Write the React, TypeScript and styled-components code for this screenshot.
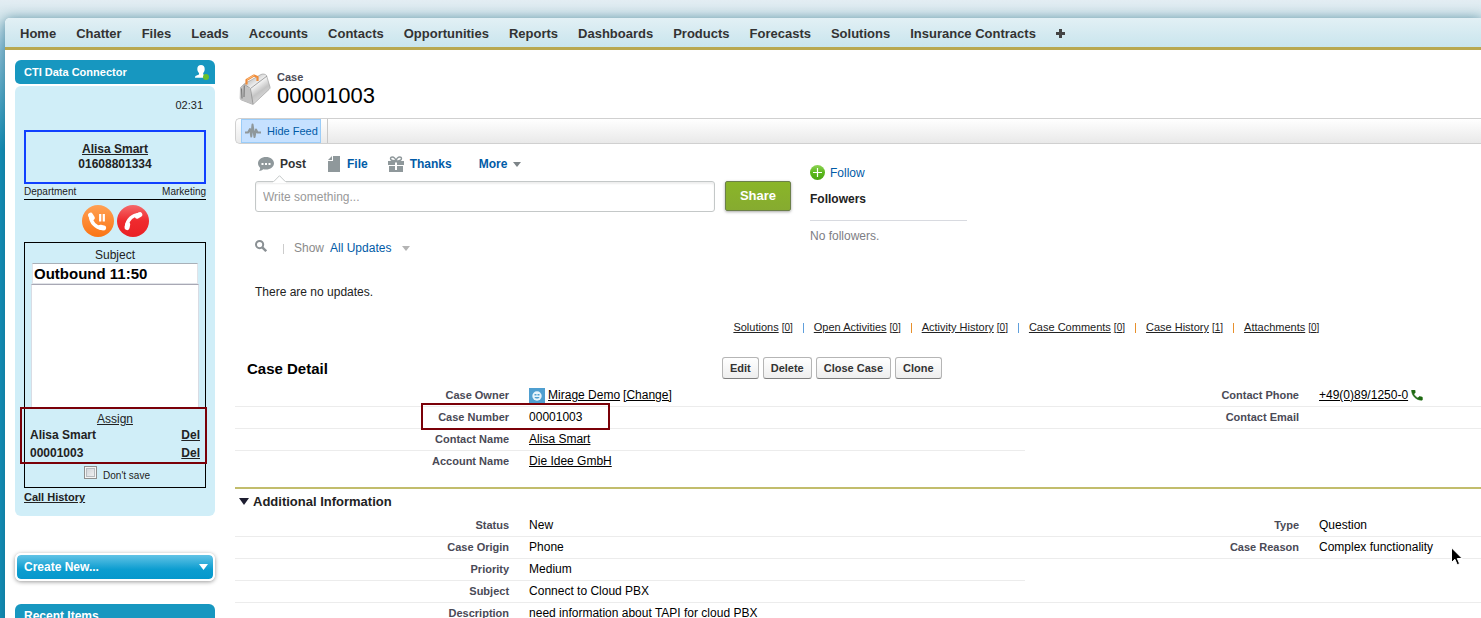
import React from 'react';
import styled, { createGlobalStyle, css } from 'styled-components';

const GlobalStyle = createGlobalStyle`
  *, *::before, *::after { box-sizing: border-box; }
  html, body { margin: 0; padding: 0; }
  body {
    height: 100vh;
    overflow: hidden;
    font-family: 'Liberation Sans', Arial, sans-serif;
    font-size: 12px;
    line-height: 15px;
    color: #222;
    background: #1590b8 linear-gradient(#e3edf3 0, #d3e6ec 18px, #8cc0d6 50px, #1590b8 150px) no-repeat;
  }
  button, input, textarea { font-family: inherit; }
  a { color: inherit; }
  svg { display: block; flex: none; }
`;

const Shell = styled.div`
  padding: 18px 0 0 5px;
`;

const Frame = styled.div`
  min-height: 100vh;
  background: #fff;
  border-top-left-radius: 5px;
  box-shadow: 0 0 12px rgba(0, 80, 110, 0.5);
`;

const TabBar = styled.nav`
  display: flex;
  align-items: center;
  height: 32px;
  padding: 2px 5px 0;
  border-bottom: 3px solid #b8a850;
  border-top-left-radius: 5px;
  background: linear-gradient(#e2f0f5, #c9e5ed);
`;

const Tab = styled.a`
  padding: 0 10px;
  font-size: 13px;
  font-weight: bold;
  color: #333;
  text-decoration: none;
  white-space: nowrap;
`;

const Columns = styled.div`
  display: grid;
  grid-template-columns: 200px minmax(0, 1fr);
  column-gap: 20px;
  padding: 10px 0 0 10px;
`;

/* ---------- sidebar ---------- */

const Sidebar = styled.aside`
  display: flex;
  flex-direction: column;
`;

const PanelTitle = styled.h2<{ $size?: number }>`
  display: flex;
  align-items: center;
  justify-content: space-between;
  height: 24px;
  margin: 0;
  padding: 0 5px 0 9px;
  border-radius: 6px 6px 0 5px;
  background: #1797c0;
  color: #fff;
  font-size: ${(p) => p.$size ?? 11}px;
`;

const CallPanel = styled.section`
  margin: 2px 0 37px;
  padding: 12px 9px 11px;
  border-radius: 6px;
  background: #d0eef8;
`;

const Timer = styled.div`
  padding-right: 3px;
  text-align: right;
  font-size: 11px;
`;

const Caller = styled.div`
  display: flex;
  flex-direction: column;
  align-items: center;
  justify-content: center;
  height: 54px;
  margin-top: 17px;
  border: 2px solid #1040ff;
  font-weight: bold;
`;

const Department = styled.div`
  display: flex;
  justify-content: space-between;
  border-bottom: 1px solid #000;
  font-size: 10px;
`;

const CallActions = styled.div`
  display: flex;
  justify-content: center;
  gap: 3px;
  padding: 5px 0;
`;

const RoundButton = styled.button`
  width: 32px;
  height: 32px;
  padding: 0;
  border: 0;
  border-radius: 50%;
  background: none;
`;

const CallForm = styled.form`
  display: flex;
  flex-direction: column;
  border: 1px solid #000;
  padding: 5px 6px 4px;
`;

const SubjectLabel = styled.label`
  text-align: center;
`;

const SubjectInput = styled.input`
  height: 21px;
  margin: 0 1px;
  padding: 0 1px;
  border: 1px solid #e0e3e8;
  border-top-color: #a8b0b8;
  background: #fff;
  color: #000;
  font-size: 15px;
  font-weight: bold;
`;

const Notes = styled.textarea`
  height: 124px;
  padding: 2px;
  border: 1px solid #d8dce4;
  border-top-color: #a8a8b4;
  border-bottom: 0;
  background: #fff;
  resize: none;
`;

const Assign = styled.div`
  position: relative;
  display: flex;
  flex-direction: column;
  align-items: center;
  padding: 4px 0 3px;

  &::after {
    content: '';
    position: absolute;
    inset: -1px -8px 0 -11px;
    border: 2px solid #7a0008;
    pointer-events: none;
  }
`;

const AssignRow = styled.div`
  display: flex;
  align-self: stretch;
  justify-content: space-between;
  margin: 0 -1px;
  line-height: 16px;
  font-weight: bold;

  & + & { margin-top: 2px; }
`;

const LinkButton = styled.button`
  padding: 0;
  border: 0;
  background: none;
  color: inherit;
  font-size: 12px;
  font-weight: inherit;
  line-height: inherit;
  text-decoration: underline;
`;

const DontSave = styled.label`
  display: flex;
  align-items: flex-end;
  justify-content: center;
  gap: 6px;
  padding: 2px 0 0 4px;
  font-size: 10px;
`;

const Checkbox = styled.input`
  appearance: none;
  width: 13px;
  height: 13px;
  margin: 0 0 4px;
  border: 1px solid #8e8f8f;
  background: linear-gradient(135deg, #cbcfd5, #f6f6f6);
  box-shadow: inset 0 0 0 1px #f4f4f4, inset 0 0 0 2px #b8bcc0;
`;

const HistoryLink = styled.a`
  display: block;
  margin-top: 2px;
  font-size: 11px;
  font-weight: bold;
`;

const CreateNew = styled.button`
  display: flex;
  align-items: center;
  justify-content: space-between;
  height: 28px;
  margin-bottom: 23px;
  padding: 0 5px 0 7px;
  border: 2px solid #fff;
  border-radius: 6px;
  background: linear-gradient(#62c3e6, #0c9dd0 60%, #0598cc) padding-box;
  box-shadow: 0 1px 4px rgba(0, 0, 0, 0.4);
  color: #fff;
  font-size: 12px;
  font-weight: bold;
`;

/* ---------- main column ---------- */

const Main = styled.main`
  min-width: 0;
`;

const PageHeader = styled.header`
  display: flex;
  align-items: center;
  gap: 6px;
  height: 58px;
  padding: 0 0 0 4px;
`;

const Kind = styled.div`
  line-height: 13px;
  font-size: 11px;
  font-weight: bold;
  color: #4a4a56;
`;

const Title = styled.h1`
  margin: 0;
  font-size: 22px;
  line-height: 24px;
  font-weight: normal;
  color: #000;
`;

const FeedBar = styled.div`
  display: flex;
  height: 26px;
  padding-left: 5px;
  border: 1px solid #d0d0d0;
  border-right: 0;
  border-radius: 5px 0 0 5px;
  background: linear-gradient(#fff, #e9e9e9);
`;

const HideFeed = styled.div`
  display: flex;
  padding-right: 6px;
  border-right: 1px solid #c8c8c8;
`;

const HideFeedButton = styled.button`
  display: flex;
  align-items: center;
  gap: 6px;
  padding: 0 2px 0 3px;
  border: 1px solid #9accf8;
  background: #c6e1ff;
  color: #015ba7;
  font-size: 11px;
`;

const Feed = styled.div`
  display: grid;
  grid-template-columns: 536px 157px;
  column-gap: 19px;
  padding: 12px 0 0 20px;
`;

const Publisher = styled.div`
  display: flex;
  align-items: center;
  height: 16px;
  padding-left: 3px;
`;

const PublisherTab = styled.button<{ $active?: boolean; $gap?: number; $after?: number }>`
  display: flex;
  align-items: center;
  gap: ${(p) => p.$gap ?? 6}px;
  margin-right: ${(p) => p.$after ?? 20}px;
  padding: 0;
  border: 0;
  background: none;
  font-size: 12px;
  font-weight: bold;
  color: ${(p) => (p.$active ? '#333' : '#015ba7')};
`;

const Composer = styled.div`
  position: relative;
  display: flex;
  gap: 10px;
  margin-top: 9px;
`;

const Notch = styled.svg`
  position: absolute;
  left: 18px;
  top: -6px;
`;

const PostInput = styled.input`
  flex: 1;
  min-width: 0;
  height: 31px;
  padding: 0 7px;
  border: 1px solid #c4c8c8;
  border-radius: 3px;
  box-shadow: inset 0 2px 2px #eee;
  background: #fff;
  font-size: 12px;
  &::placeholder { color: #999; }
`;

const ShareButton = styled.button`
  width: 66px;
  height: 30px;
  padding: 0 0 2px;
  border: 1px solid #6c8049;
  border-radius: 2px;
  background: linear-gradient(#8ab528, #86ab30);
  box-shadow: 0 1px 3px rgba(0, 0, 0, 0.35);
  color: #fff;
  font-size: 13px;
  font-weight: bold;
`;

const FilterRow = styled.div`
  display: flex;
  align-items: center;
  margin: 28px 0;
`;

const SearchButton = styled.button`
  margin-bottom: 5px;
  padding: 0;
  border: 0;
  background: none;
`;

const Show = styled.div`
  margin-left: 16px;
  padding-left: 11px;
  color: #8a8a8a;
  background: linear-gradient(#ccc, #ccc) 0 50% / 1px 10px no-repeat;
`;

const UpdatesMenu = styled.button`
  display: inline-flex;
  align-items: center;
  gap: 11px;
  margin-left: 6px;
  padding: 0;
  border: 0;
  background: none;
  color: #015ba7;
  font-size: 12px;
`;

const Empty = styled.p`
  margin: 0;
`;

const Followers = styled.div`
  padding-top: 9px;
`;

const FollowButton = styled.button`
  display: flex;
  align-items: center;
  gap: 5px;
  height: 15px;
  padding: 0;
  border: 0;
  background: none;
  color: #015ba7;
  font-size: 12px;
`;

const FollowersTitle = styled.h3`
  margin: 12px 0 8px;
  padding-bottom: 13px;
  border-bottom: 1px solid #d8dae0;
  font-size: 12px;
  color: #222;
`;

const Muted = styled.p`
  margin: 0;
  color: #7d7d84;
`;

const RelatedLinks = styled.ul`
  display: flex;
  margin: 20px 0 22px;
  padding: 0 0 0 40%;
  list-style: none;
  font-size: 11px;
  white-space: nowrap;
  color: #222;
`;

const RelatedItem = styled.li<{ $rule?: string }>`
  display: flex;
  align-items: center;
  ${(p) =>
    p.$rule &&
    css`
      &::after {
        content: '';
        width: 1px;
        height: 10px;
        margin: 0 10px;
        background: ${p.$rule};
      }
    `}
`;

const Count = styled.span`
  margin-left: 3px;
  font-size: 10px;
`;

const DetailHead = styled.div`
  display: grid;
  grid-template-columns: 39% 1fr;
  align-items: center;
  margin-bottom: 6px;
`;

const DetailTitle = styled.h2`
  margin: 0;
  padding-left: 12px;
  font-size: 15px;
  color: #000;
`;

const Buttons = styled.div`
  display: flex;
  gap: 4px;
  padding-left: 1px;
`;

const DetailButton = styled.button`
  height: 22px;
  padding: 0 7px;
  border: 1px solid #b5b5b5;
  border-bottom-color: #7f7f7f;
  border-radius: 3px;
  background: linear-gradient(#fff, #eee);
  color: #333;
  font-size: 11px;
  font-weight: bold;
`;

const Details = styled.table`
  width: 100%;
  table-layout: fixed;
  border-collapse: separate;
  border-spacing: 0;
`;

const DetailCol = styled.col<{ $width: string }>`
  width: ${(p) => p.$width};
`;

const rule = css<{ $ruled?: boolean }>`
  height: 22px;
  border-bottom: 1px solid ${(p) => (p.$ruled ? '#ececec' : 'transparent')};
  line-height: 15px;
  vertical-align: middle;
`;

const Label = styled.th<{ $ruled?: boolean }>`
  ${rule}
  padding: 0 20px 1px 0;
  text-align: right;
  font-size: 11px;
  color: #4a4a56;
`;

const Value = styled.td<{ $ruled?: boolean }>`
  ${rule}
  position: relative;
  padding: 0;
  color: #000;
  white-space: nowrap;
`;

const Inline = styled.span`
  display: flex;
  align-items: center;
  gap: 3px;
`;

const Highlight = styled.span`
  position: absolute;
  left: -108px;
  top: -4px;
  width: 189px;
  height: 27px;
  border: 2px solid #7a0008;
  pointer-events: none;
`;

const SectionTitle = styled.h3`
  display: flex;
  align-items: center;
  gap: 4px;
  margin: 14px 0 1px;
  padding: 5px 0 5px 4px;
  border-top: 2px solid #c2bd6c;
  font-size: 13px;
  color: #222;
`;

const Pointer = styled.svg`
  position: absolute;
  right: 18px;
  top: 547px;
`;

/* ---------- icons ---------- */

const UserIcon = () => (
  <svg width="16" height="17" viewBox="0 0 16 17" aria-hidden="true">
    <path d="M7 1c2.300 0 3.700 1.600 3.700 4 0 1.800-.6 3-1.500 4v1.400l3.600 1.500c.8.400 1 1 1 1.900H1c0-1.200.3-1.800 1-2.100l3-1.300V9C4 8 3.300 6.800 3.300 5 3.300 2.600 4.700 1 7 1z" fill="#fff" />
    <circle cx="12" cy="13" r="3" fill="#69c02c" />
  </svg>
);

const HANDSET =
  'M6.600 10.800c1.400 2.800 3.800 5.100 6.600 6.600l2.200-2.200c.3-.3.700-.4 1-.2 1.100.4 2.300.6 3.600.6.600 0 1 .4 1 1V20c0 .6-.4 1-1 1C10.600 21 3 13.400 3 4c0-.6.400-1 1-1h3.500c.6 0 1 .4 1 1 0 1.200.2 2.400.6 3.600.1.300 0 .7-.2 1z';

const Receiver = () => (
  <g fill="none" stroke="#fff" strokeLinecap="round">
    <path d="M8.500 11c.5 6.500 5 11.500 12 12.500" strokeWidth="3.600" />
    <path d="M8.600 10.200l1.600 2.600M18.600 22.300l3 .6" strokeWidth="5" />
  </g>
);

const HoldIcon = () => (
  <svg width="32" height="32" viewBox="0 0 32 32" aria-hidden="true">
    <defs>
      <linearGradient id="hold" x2="0" y2="1">
        <stop offset="0" stopColor="#ffa053" />
        <stop offset="1" stopColor="#fb7413" />
      </linearGradient>
    </defs>
    <circle cx="16" cy="16" r="16" fill="url(#hold)" />
    <Receiver />
    <path d="M18.200 9v7.500M21.800 9v7.500" stroke="#fff" strokeWidth="2.200" />
  </svg>
);

const HangUpIcon = () => (
  <svg width="32" height="32" viewBox="0 0 32 32" aria-hidden="true">
    <defs>
      <linearGradient id="hang" x2="0" y2="1">
        <stop offset="0" stopColor="#f4696b" />
        <stop offset=".5" stopColor="#ef2a2e" />
        <stop offset="1" stopColor="#ea2024" />
      </linearGradient>
    </defs>
    <circle cx="16" cy="16" r="16" fill="url(#hang)" />
    <g transform="rotate(90 16 16)">
      <g transform="translate(1 -1)"><Receiver /></g>
    </g>
  </svg>
);

const CaseIcon = () => (
  <svg width="32" height="34" viewBox="0 0 32 34" aria-hidden="true">
    <defs>
      <linearGradient id="bag" x1=".3" y1=".2" x2=".8" y2=".9">
        <stop offset="0" stopColor="#c8c8c8" />
        <stop offset=".3" stopColor="#f4f4f4" />
        <stop offset=".6" stopColor="#c4c4c4" />
        <stop offset="1" stopColor="#e2e2e2" />
      </linearGradient>
    </defs>
    <path d="M1.500 15.500L5 12 22 2.500c2-.9 4.300-.5 5.500 1L31 15c.2 1-.2 1.900-1 2.500L14 32.500 2.500 28c-1-.4-1.300-1-1.300-2z" fill="url(#bag)" stroke="#a0a0a0" strokeWidth=".7" strokeLinejoin="round" />
    <path d="M1.500 15.500L5 12.500l6 4.500L13.500 32 2.500 28c-1-.4-1.300-1-1.300-2z" fill="#c2c2c2" />
    <path d="M5.300 13.500L5 25M2.500 16.500l.5 10" fill="none" stroke="#777" strokeWidth="1.100" />
    <path d="M5.500 12.500l6 4L28 4M11.500 17L14 32" fill="none" stroke="#8c8c8c" strokeWidth=".8" />
    <path d="M7.500 12.500V8L15 3.500l3.500 1.500v4" fill="none" stroke="#ee8b3a" strokeWidth="2.200" strokeLinejoin="round" />
    <path d="M8 7.500L15.200 3.300" stroke="#ffc487" strokeWidth=".9" />
  </svg>
);

const PulseIcon = () => (
  <svg width="16" height="16" viewBox="0 0 16 16" aria-hidden="true">
    <path d="M0 9.500h3L5 6l1.300 7.500L7.500 1.500 9.500 14 11 6.500l1.500 3H16" fill="none" stroke="#8f989b" strokeWidth="2" strokeLinejoin="round" />
  </svg>
);

const PostIcon = () => (
  <svg width="16" height="16" viewBox="0 0 16 16" aria-hidden="true">
    <path d="M8 1c4.400 0 8 2.700 8 6.300s-3.600 6.300-8 6.300c-1 0-2-.1-2.800-.4-1 1-2.600 1.600-4.200 1.700.8-.9 1.200-2 1.200-3C.8 10.700 0 9 0 7.300 0 3.700 3.600 1 8 1z" fill="#8f989b" />
    <path d="M3.500 7h2v2h-2zM7 7h2v2H7zM10.500 7h2v2h-2z" fill="#fff" />
  </svg>
);

const FileIcon = () => (
  <svg width="12" height="16" viewBox="0 0 12 16" aria-hidden="true">
    <path d="M5 0h7v16H0V5h5z" fill="#8f989b" />
    <path d="M4 0v4H0z" fill="#8f989b" />
  </svg>
);

const GiftIcon = () => (
  <svg width="16" height="16" viewBox="0 0 16 16" aria-hidden="true">
    <path d="M0 5h16v4H0zM1 10h14v6H1z" fill="#8f989b" />
    <path d="M8 5C6 5 2.500 4.500 2.500 2.500 2.500 1.500 3.300 1 4.200 1 6.300 1 7.500 3 8 5zM8 5c2 0 5.500-.5 5.500-2.500 0-1-.8-1.500-1.700-1.500C9.700 1 8.500 3 8 5z" fill="none" stroke="#8f989b" strokeWidth="1.400" />
    <path d="M7 6.500h2V14H7z" fill="#fff" />
  </svg>
);

const Caret = ({ color, width = 8, height = 5 }: { color: string; width?: number; height?: number }) => (
  <svg width={width} height={height} viewBox="0 0 8 5" preserveAspectRatio="none" aria-hidden="true">
    <path d="M0 0h8L4 5z" fill={color} />
  </svg>
);

const SearchIcon = () => (
  <svg width="12" height="12" viewBox="0 0 12 12" aria-hidden="true">
    <circle cx="4.600" cy="4.600" r="3.600" fill="none" stroke="#8a9094" strokeWidth="2" />
    <path d="M7.300 7.300l3.900 3.900" stroke="#8a9094" strokeWidth="2.400" />
  </svg>
);

const FollowIcon = () => (
  <svg width="15" height="15" viewBox="0 0 15 15" aria-hidden="true">
    <defs>
      <linearGradient id="follow" x2="0" y2="1">
        <stop offset="0" stopColor="#8ed455" />
        <stop offset=".5" stopColor="#5cb81e" />
        <stop offset="1" stopColor="#4aa512" />
      </linearGradient>
    </defs>
    <circle cx="7.500" cy="7.500" r="7.500" fill="url(#follow)" />
    <path d="M7.500 3v9M3 7.500h9" stroke="#fff" strokeWidth="1.200" />
  </svg>
);

const AvatarIcon = () => (
  <svg width="16" height="16" viewBox="0 0 16 16" aria-hidden="true">
    <path d="M0 0h16v16H0z" fill="#4f9fd0" />
    <circle cx="8" cy="8" r="4.700" fill="#e6f4fb" />
    <path d="M5.500 6h2v1.500h-2zM8.500 6h2v1.500h-2zM5.500 9h5c-.5 2-4.500 2-5 0z" fill="#4f9fd0" />
  </svg>
);

const PhoneIcon = () => (
  <svg width="12" height="12" viewBox="2 4 20 20" aria-hidden="true">
    <path d={HANDSET} fill="#1f6a12" stroke="#1f6a12" />
  </svg>
);

const PlusIcon = () => (
  <svg width="9" height="9" viewBox="0 0 9 9" aria-hidden="true">
    <path d="M4.500 0v9M0 4.500h9" stroke="#444" strokeWidth="3" />
  </svg>
);

/* ---------- data ---------- */

const TABS = [
  'Home', 'Chatter', 'Files', 'Leads', 'Accounts', 'Contacts', 'Opportunities', 'Reports',
  'Dashboards', 'Products', 'Forecasts', 'Solutions', 'Insurance Contracts',
];

const BLUE = '#5f9fdc';
const ORANGE = '#e8902c';

const RELATED: { name: string; count: number; rule?: string }[] = [
  { name: 'Solutions', count: 0, rule: BLUE },
  { name: 'Open Activities', count: 0, rule: ORANGE },
  { name: 'Activity History', count: 0, rule: BLUE },
  { name: 'Case Comments', count: 0, rule: ORANGE },
  { name: 'Case History', count: 1, rule: ORANGE },
  { name: 'Attachments', count: 0 },
];

const ACTIONS = ['Edit', 'Delete', 'Close Case', 'Clone'];

type Field = { label: string; value?: React.ReactNode };
type Row = { left: Field; right?: Field; wide?: boolean; last?: boolean };

const CASE_ROWS: Row[] = [
  {
    left: {
      label: 'Case Owner',
      value: (
        <Inline>
          <AvatarIcon />
          <a href="#owner">Mirage Demo</a>
          <a href="#change">[Change]</a>
        </Inline>
      ),
    },
    right: {
      label: 'Contact Phone',
      value: (
        <Inline>
          <a href="#call">+49(0)89/1250-0</a>
          <PhoneIcon />
        </Inline>
      ),
    },
  },
  { left: { label: 'Case Number', value: <>00001003<Highlight /></> }, right: { label: 'Contact Email' } },
  { left: { label: 'Contact Name', value: <a href="#contact">Alisa Smart</a> } },
  { left: { label: 'Account Name', value: <a href="#account">Die Idee GmbH</a> }, last: true },
];

const INFO_ROWS: Row[] = [
  { left: { label: 'Status', value: 'New' }, right: { label: 'Type', value: 'Question' } },
  { left: { label: 'Case Origin', value: 'Phone' }, right: { label: 'Case Reason', value: 'Complex functionality' } },
  { left: { label: 'Priority', value: 'Medium' } },
  { left: { label: 'Subject', value: 'Connect to Cloud PBX' }, wide: true },
  { left: { label: 'Description', value: 'need information about TAPI for cloud PBX' }, wide: true },
];

const DetailTable = ({ rows }: { rows: Row[] }) => (
  <Details>
    <colgroup>
      <DetailCol $width="23.6%" />
      <DetailCol $width="39.8%" />
      <DetailCol $width="23.6%" />
      <DetailCol $width="13%" />
    </colgroup>
    <tbody>
      {rows.map(({ left, right, wide, last }) => (
        <tr key={left.label}>
          <Label scope="row" $ruled={!last}>{left.label}</Label>
          <Value $ruled={!last} colSpan={wide ? 3 : 1}>{left.value}</Value>
          {right && <Label scope="row" $ruled>{right.label}</Label>}
          {right && <Value $ruled>{right.value}</Value>}
        </tr>
      ))}
    </tbody>
  </Details>
);

export default function App() {
  return (
    <>
      <GlobalStyle />
      <Shell>
        <Frame>
          <TabBar>
            {TABS.map((t) => (
              <Tab key={t} href="#tab">{t}</Tab>
            ))}
            <Tab href="#all" aria-label="All tabs"><PlusIcon /></Tab>
          </TabBar>
          <Columns>
            <Sidebar>
              <PanelTitle>CTI Data Connector<UserIcon /></PanelTitle>
              <CallPanel>
                <Timer>02:31</Timer>
                <Caller>
                  <a href="#caller">Alisa Smart</a>
                  <span>01608801334</span>
                </Caller>
                <Department><span>Department</span><span>Marketing</span></Department>
                <CallActions>
                  <RoundButton aria-label="Hold"><HoldIcon /></RoundButton>
                  <RoundButton aria-label="Hang up"><HangUpIcon /></RoundButton>
                </CallActions>
                <CallForm>
                  <SubjectLabel htmlFor="subject">Subject</SubjectLabel>
                  <SubjectInput id="subject" defaultValue="Outbound 11:50" />
                  <Notes aria-label="Notes" />
                  <Assign>
                    <LinkButton type="button">Assign</LinkButton>
                    <AssignRow>Alisa Smart<LinkButton type="button">Del</LinkButton></AssignRow>
                    <AssignRow>00001003<LinkButton type="button">Del</LinkButton></AssignRow>
                  </Assign>
                  <DontSave><Checkbox type="checkbox" />Don't save</DontSave>
                </CallForm>
                <HistoryLink href="#history">Call History</HistoryLink>
              </CallPanel>
              <CreateNew>Create New...<Caret color="#fff" width={9} height={6} /></CreateNew>
              <PanelTitle $size={12}>Recent Items</PanelTitle>
            </Sidebar>

            <Main>
              <PageHeader>
                <CaseIcon />
                <div>
                  <Kind>Case</Kind>
                  <Title>00001003</Title>
                </div>
              </PageHeader>
              <FeedBar>
                <HideFeed>
                  <HideFeedButton><PulseIcon />Hide Feed</HideFeedButton>
                </HideFeed>
              </FeedBar>
              <Feed>
                <div>
                  <Publisher>
                    <PublisherTab $active $after={22}><PostIcon />Post</PublisherTab>
                    <PublisherTab $gap={7}><FileIcon />File</PublisherTab>
                    <PublisherTab $after={27}><GiftIcon />Thanks</PublisherTab>
                    <PublisherTab>More<Caret color="#7d8488" /></PublisherTab>
                  </Publisher>
                  <Composer>
                    <PostInput placeholder="Write something..." aria-label="Write something" />
                    <Notch width="13" height="8" viewBox="0 0 13 8" aria-hidden="true">
                      <path d="M0 7L6.500.7 13 7v1H0z" fill="#fff" />
                      <path d="M.5 6.800L6.500.7l6 6.100" fill="none" stroke="#c4c8c8" />
                    </Notch>
                    <ShareButton>Share</ShareButton>
                  </Composer>
                  <FilterRow>
                    <SearchButton aria-label="Search feed"><SearchIcon /></SearchButton>
                    <Show>
                      Show
                      <UpdatesMenu>All Updates<Caret color="#b4b4b4" /></UpdatesMenu>
                    </Show>
                  </FilterRow>
                  <Empty>There are no updates.</Empty>
                </div>
                <Followers>
                  <FollowButton><FollowIcon />Follow</FollowButton>
                  <FollowersTitle>Followers</FollowersTitle>
                  <Muted>No followers.</Muted>
                </Followers>
              </Feed>
              <RelatedLinks>
                {RELATED.map((r) => (
                  <RelatedItem key={r.name} $rule={r.rule}>
                    <a href="#related">{r.name}</a>
                    <Count><a href="#related">[{r.count}]</a></Count>
                  </RelatedItem>
                ))}
              </RelatedLinks>
              <DetailHead>
                <DetailTitle>Case Detail</DetailTitle>
                <Buttons>
                  {ACTIONS.map((a) => (
                    <DetailButton key={a}>{a}</DetailButton>
                  ))}
                </Buttons>
              </DetailHead>
              <DetailTable rows={CASE_ROWS} />
              <SectionTitle><Caret color="#1d1d30" width={10} height={7} />Additional Information</SectionTitle>
              <DetailTable rows={INFO_ROWS} />
            </Main>
          </Columns>
        </Frame>
      </Shell>
      <Pointer width="12" height="19" viewBox="0 0 12 19" aria-hidden="true">
        <path d="M.5.800v14.700l3.400-3.200 2.300 5.400 2.400-1-2.300-5.200h4.900z" fill="#000" stroke="#fff" />
      </Pointer>
    </>
  );
}
